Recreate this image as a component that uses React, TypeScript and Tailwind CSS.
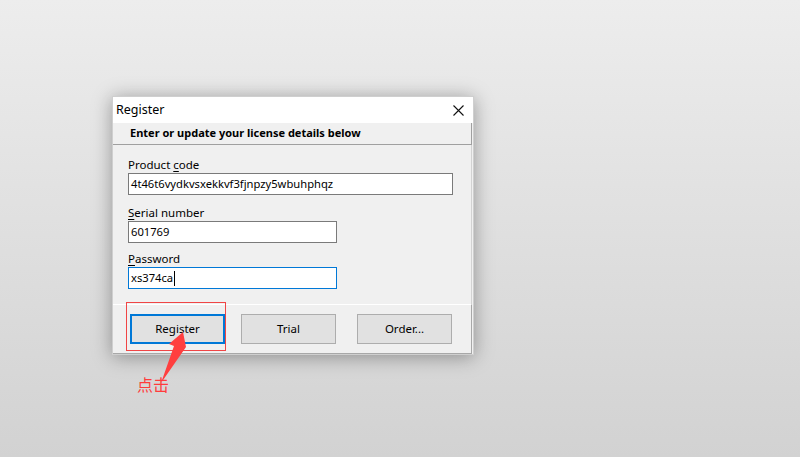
import { useState } from "react";

const Field = ({
  label,
  value,
  width,
  focused,
  className,
}: {
  label: [string, string, string];
  value: string;
  width: string;
  focused?: boolean;
  className?: string;
}) => {
  return (
    <div className={`flex flex-col ${className ?? ""}`}>
      <div className="h-[16px] leading-[16px] text-[11.5px] text-black">
        {label[0]}
        <span className="underline underline-offset-2">{label[1]}</span>
        {label[2]}
      </div>
      <div
        className={`h-[22px] bg-white flex items-center pl-[2px] text-[11.2px] text-black ${width} ${
          focused ? "border border-[#0078d7]" : "border border-[#7a7a7a]"
        }`}
      >
        <span>{value}</span>
        {focused && <span className="w-[1px] h-[15px] bg-black ml-[1px]" />}
      </div>
    </div>
  );
};

const App = () => {
  const [active] = useState("register");

  return (
    <div
      className="relative w-full h-screen overflow-hidden bg-gradient-to-b from-[#ededed] to-[#d2d2d2]"
      style={{ fontFamily: '"Noto Sans", "Noto Sans CJK SC", sans-serif' }}
    >
      <div className="pt-[96px] pl-[112px]">
        {/* window */}
        <div className="w-[362px] border border-[#cfcfcf] bg-[#f0f0f0] shadow-[0_2px_18px_rgba(0,0,0,0.35)]">
          <div className="h-[26px] bg-white flex items-center justify-between pl-[3px] pr-[9px]">
            <span className="text-[12.5px] text-black">Register</span>
            <svg width="11" height="11" viewBox="0 0 11 11">
              <path d="M0.5 0.5 L10.5 10.5 M10.5 0.5 L0.5 10.5" stroke="#111" strokeWidth="1.1" />
            </svg>
          </div>

          <div className="h-[22px] flex items-center pl-[17px] border-b border-r border-[#a0a0a0] mr-[1px]">
            <span className="text-[11px] font-bold text-black">Enter or update your license details below</span>
          </div>

          <div className="flex flex-col pt-[12px] pb-[15px] pl-[15px] border-r border-[#d2d2d2] mr-[1px]">
            <Field label={["Product ", "c", "ode"]} value="4t46t6vydkvsxekkvf3fjnpzy5wbuhphqz" width="w-[325px]" />
            <Field
              label={["", "S", "erial number"]}
              value="601769"
              width="w-[209px]"
              className="mt-[10px]"
            />
            <Field
              label={["", "P", "assword"]}
              value="xs374ca"
              width="w-[209px]"
              focused
              className="mt-[8px]"
            />
          </div>

          <div className="h-[50px] border-t border-white border-r border-b border-r-[#a8a8a8] border-b-[#a8a8a8] mr-[1px] flex items-start pt-[9px] pl-[17px] text-[11.5px] text-black">
            <button
              className={`w-[95px] h-[30px] bg-[#e1e1e1] ${
                active === "register" ? "border-2 border-[#0078d7]" : "border border-[#adadad]"
              }`}
            >
              Register
            </button>
            <button className="w-[95px] h-[30px] ml-[16px] bg-[#e1e1e1] border border-[#adadad]">Trial</button>
            <button className="w-[95px] h-[30px] ml-[21px] bg-[#e1e1e1] border border-[#adadad]">Order...</button>
          </div>
        </div>
      </div>

      {/* annotation */}
      <div className="absolute left-[126px] top-[302px] w-[100px] h-[49px] border border-[#f04545]" />
      <svg className="absolute left-0 top-0" width="800" height="457" viewBox="0 0 800 457">
        <polygon points="183,332 186,347 161,383 174,346 169,344" fill="#ff3f3f" />
      </svg>
      <div className="absolute left-[137px] top-[375px] text-[16px] leading-[20px] text-[#ff3b3b]">点击</div>
    </div>
  );
};

export default App;
